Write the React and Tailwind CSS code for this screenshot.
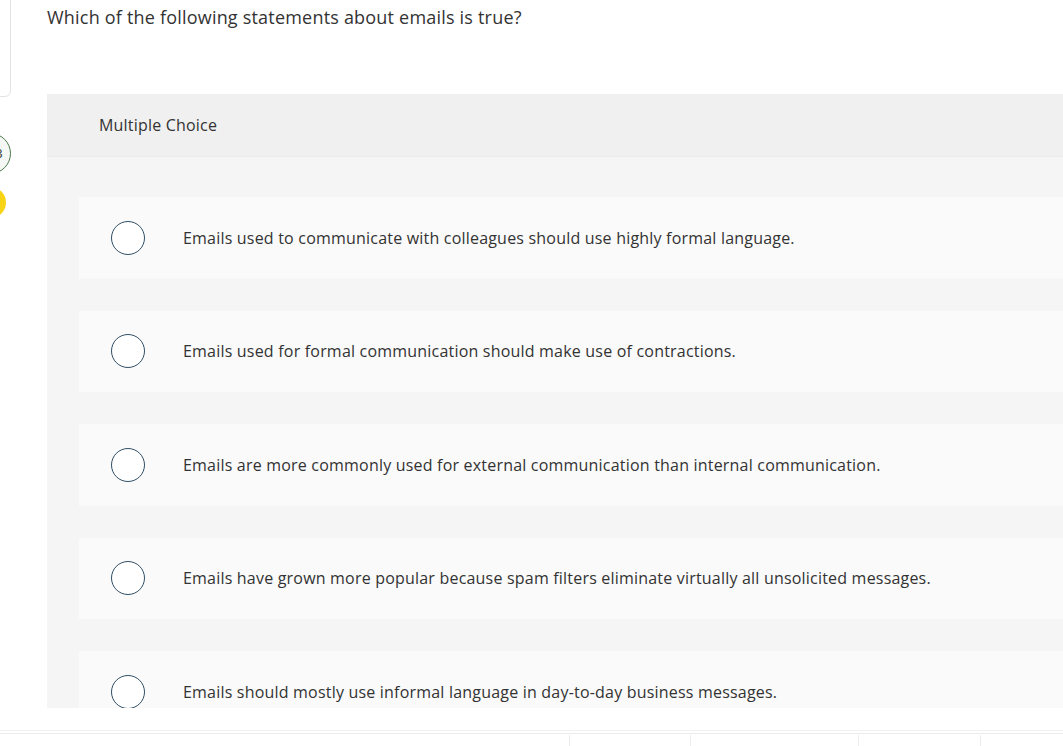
import React from "react";

const options = [
  "Emails used to communicate with colleagues should use highly formal language.",
  "Emails used for formal communication should make use of contractions.",
  "Emails are more commonly used for external communication than internal communication.",
  "Emails have grown more popular because spam filters eliminate virtually all unsolicited messages.",
  "Emails should mostly use informal language in day-to-day business messages.",
];

export default function App() {
  return (
    <div className="relative w-[1063px] h-[746px] overflow-hidden bg-white text-[#333] tracking-[0.2px]" style={{ fontFamily: "'Open Sans', sans-serif" }}>
      {/* left sidebar pieces */}
      <div className="absolute left-[-20px] top-[-10px] w-[31px] h-[107px] border border-[#e3e3e3] rounded-br-[6px] bg-white" />
      <div className="absolute left-[-30px] top-[133px] w-[41px] h-[41px] rounded-full border border-[#4a7a4a] bg-[#f4f7f4] flex items-center justify-end pr-[7px] text-[13px] leading-none text-[#333]">3</div>
      <div className="absolute left-[-25px] top-[187px] w-[31px] h-[31px] rounded-full bg-[#f7d416]" />

      <div className="pl-[47px] flex flex-col">
        <div className="h-[94px] pt-[5px] text-[18px] leading-[24px] text-[#333]">Which of the following statements about emails is true?</div>
        <div className="h-[614px] overflow-hidden bg-[#f5f5f5]">
          <div className="h-[63px] bg-[#f0f0f0] border-b border-[#ebebeb] pl-[52px] flex items-center text-[16px] text-[#333]">Multiple Choice</div>
          <div className="pl-[32px] pt-[40px] flex flex-col gap-[32px]">
            {options.map((t, i) => (
              <div key={i} className="h-[81.5px] shrink-0 bg-[#fafafa] flex items-center">
                <div className="ml-[32px] w-[34px] h-[34px] rounded-full border-[1.5px] border-[#2f4e66] bg-white shrink-0" />
                <div className="ml-[38px] text-[16px] text-[#333] whitespace-nowrap">{t}</div>
              </div>
            ))}
          </div>
        </div>
        <div className="h-[22px]" />
        <div className="h-[1px] bg-[#f2f2f2] ml-[-47px]" />
        <div className="h-[2px]" />
        <div className="h-[1px] bg-[#ebebeb] ml-[-47px]" />
      </div>
      <div className="absolute top-[735px] left-[569px] w-[1px] h-[11px] bg-[#ececec]" />
      <div className="absolute top-[735px] left-[690px] w-[1px] h-[11px] bg-[#ececec]" />
      <div className="absolute top-[735px] left-[858px] w-[1px] h-[11px] bg-[#ececec]" />
      <div className="absolute top-[735px] left-[980px] w-[1px] h-[11px] bg-[#ececec]" />
    </div>
  );
}
